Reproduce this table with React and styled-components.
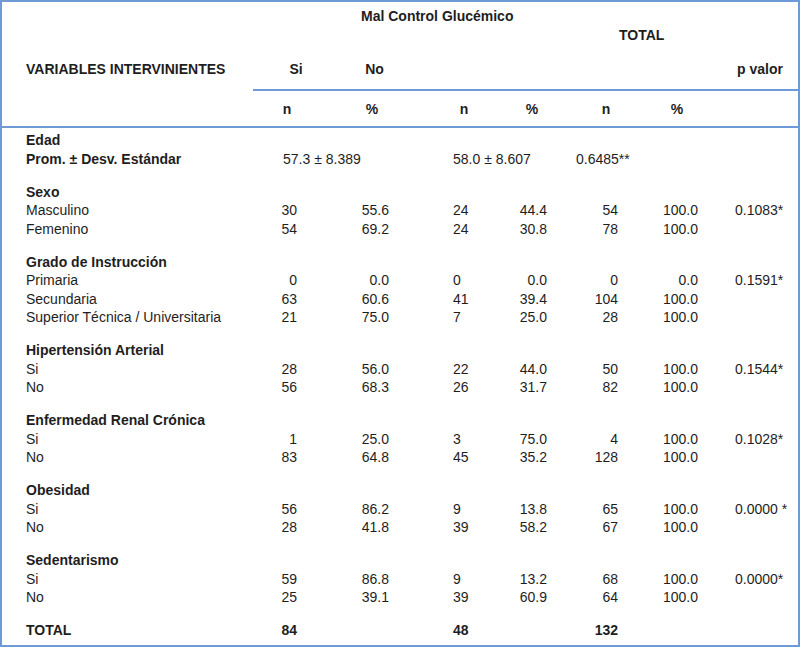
import * as React from 'react'
import styled, { createGlobalStyle } from 'styled-components'

const LINE = '#6e9bd7'
const INK = '#1e1e1e'

const GlobalStyle = createGlobalStyle`
  body {
    margin: 0;
    background: #fff;
    font-family: "Liberation Sans", Arial, Helvetica, sans-serif;
    font-size: 14px;
    color: ${INK};
  }
  * {
    box-sizing: border-box;
  }
`

const Frame = styled.div`
  width: 800px;
  height: 647px;
  border: 2px solid ${LINE};
  overflow: hidden;
`

const HeadTop = styled.div`
  padding-top: 5px;
  padding-bottom: 10px;
  font-weight: bold;
`

const HeadLine = styled.div`
  height: 19px;
  line-height: 19px;
  padding-left: ${(p) => p.$indent}px;
`

const LabelLine = styled.div`
  display: grid;
  grid-template-columns: 251px 86px 71px 1fr;
  height: 19px;
  line-height: 19px;
  margin-top: 15px;
`

const HeadCell = styled.div`
  text-align: ${(p) => p.$align || 'center'};
  padding-left: ${(p) => p.$padLeft || 0}px;
  padding-right: ${(p) => p.$padRight || 0}px;
  white-space: nowrap;
`

const SubHeadWrap = styled.div`
  border-bottom: 2px solid ${LINE};
`

const SubHead = styled.div`
  margin-left: 251px;
  border-top: 2px solid ${LINE};
  height: 37px;
  display: grid;
  grid-template-columns: 68px 102px 82px 54px 94px 48px 1fr;
  align-items: center;
  font-weight: bold;
`

const Body = styled.div`
  padding-top: 3px;
`

const Group = styled.div`
  margin-bottom: 14.5px;
`

const Row = styled.div`
  display: grid;
  grid-template-columns: 251px 44px 92px 111px 47px 71px 80px 98px;
  height: 18.5px;
  align-items: center;
  font-weight: ${(p) => (p.$bold ? 'bold' : 'normal')};
`

const Label = styled.div`
  padding-left: 24px;
  white-space: nowrap;
  font-weight: ${(p) => (p.$bold ? 'bold' : 'inherit')};
`

const Num = styled.div`
  text-align: right;
  white-space: nowrap;
`

const LeftNum = styled.div`
  text-align: left;
  white-space: nowrap;
  padding-left: ${(p) => p.$pad}px;
`

const Span = styled.div`
  grid-column: ${(p) => p.$col} / span 2;
  padding-left: ${(p) => p.$pad}px;
  white-space: nowrap;
`

const groups = [
  {
    title: 'Sexo',
    rows: [
      ['Masculino', '30', '55.6', '24', '44.4', '54', '100.0', '0.1083*'],
      ['Femenino', '54', '69.2', '24', '30.8', '78', '100.0', ''],
    ],
  },
  {
    title: 'Grado de Instrucción',
    rows: [
      ['Primaria', '0', '0.0', '0', '0.0', '0', '0.0', '0.1591*'],
      ['Secundaria', '63', '60.6', '41', '39.4', '104', '100.0', ''],
      ['Superior Técnica / Universitaria', '21', '75.0', '7', '25.0', '28', '100.0', ''],
    ],
  },
  {
    title: 'Hipertensión Arterial',
    rows: [
      ['Si', '28', '56.0', '22', '44.0', '50', '100.0', '0.1544*'],
      ['No', '56', '68.3', '26', '31.7', '82', '100.0', ''],
    ],
  },
  {
    title: 'Enfermedad Renal Crónica',
    rows: [
      ['Si', '1', '25.0', '3', '75.0', '4', '100.0', '0.1028*'],
      ['No', '83', '64.8', '45', '35.2', '128', '100.0', ''],
    ],
  },
  {
    title: 'Obesidad',
    rows: [
      ['Si', '56', '86.2', '9', '13.8', '65', '100.0', '0.0000 *'],
      ['No', '28', '41.8', '39', '58.2', '67', '100.0', ''],
    ],
  },
  {
    title: 'Sedentarismo',
    rows: [
      ['Si', '59', '86.8', '9', '13.2', '68', '100.0', '0.0000*'],
      ['No', '25', '39.1', '39', '60.9', '64', '100.0', ''],
    ],
  },
]

function DataRow({ cells }) {
  const [label, siN, siP, noN, noP, totN, totP, p] = cells
  return (
    <Row>
      <Label>{label}</Label>
      <Num>{siN}</Num>
      <Num>{siP}</Num>
      <LeftNum $pad={64}>{noN}</LeftNum>
      <Num>{noP}</Num>
      <Num>{totN}</Num>
      <Num>{totP}</Num>
      <LeftNum $pad={37}>{p}</LeftNum>
    </Row>
  )
}

export default function App() {
  return (
    <>
      <GlobalStyle />
      <Frame>
        <HeadTop>
          <HeadLine $indent={359}>Mal Control Glucémico</HeadLine>
          <HeadLine $indent={617}>TOTAL</HeadLine>
          <LabelLine>
            <HeadCell $align="left" $padLeft={24}>VARIABLES INTERVINIENTES</HeadCell>
            <HeadCell>Si</HeadCell>
            <HeadCell>No</HeadCell>
            <HeadCell $align="right" $padRight={15}>p valor</HeadCell>
          </LabelLine>
        </HeadTop>

        <SubHeadWrap>
          <SubHead>
            <HeadCell>n</HeadCell>
            <HeadCell>%</HeadCell>
            <HeadCell>n</HeadCell>
            <HeadCell>%</HeadCell>
            <HeadCell>n</HeadCell>
            <HeadCell>%</HeadCell>
          </SubHead>
        </SubHeadWrap>

        <Body>
          <Group>
            <Row $bold>
              <Label>Edad</Label>
            </Row>
            <Row>
              <Label $bold>Prom. ± Desv. Estándar</Label>
              <Span $col={2} $pad={30}>57.3 ± 8.389</Span>
              <Span $col={4} $pad={64}>58.0 ± 8.607</Span>
              <Span $col={6} $pad={29}>0.6485**</Span>
            </Row>
          </Group>

          {groups.map((g) => (
            <Group key={g.title}>
              <Row $bold>
                <Label>{g.title}</Label>
              </Row>
              {g.rows.map((r) => (
                <DataRow key={r[0]} cells={r} />
              ))}
            </Group>
          ))}

          <Row $bold>
            <Label>TOTAL</Label>
            <Num>84</Num>
            <Num />
            <LeftNum $pad={64}>48</LeftNum>
            <Num />
            <Num>132</Num>
          </Row>
        </Body>
      </Frame>
    </>
  )
}
